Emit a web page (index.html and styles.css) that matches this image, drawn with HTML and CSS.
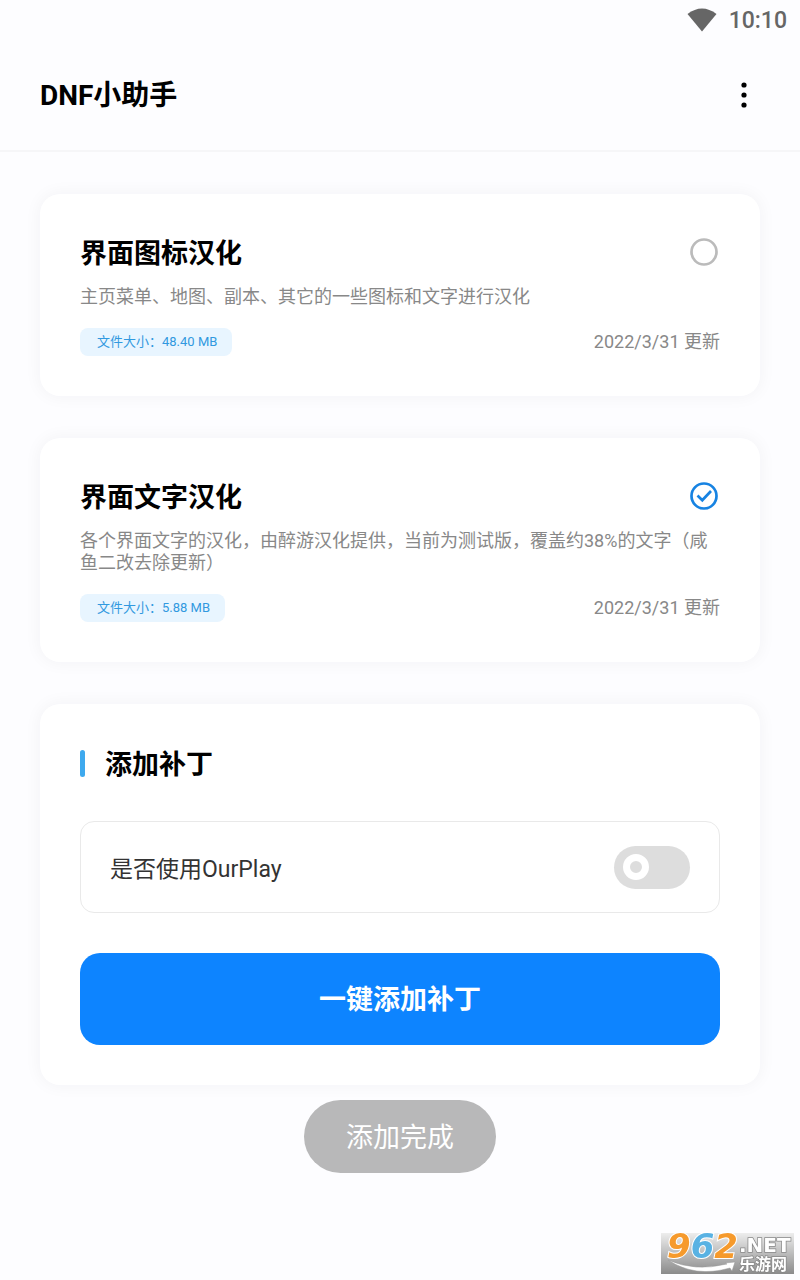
FILE: index.html
```html
<!DOCTYPE html>
<html lang="zh-CN">
<head>
<meta charset="utf-8">
<meta name="viewport" content="width=device-width, initial-scale=1">
<title>DNF小助手</title>
<link rel="stylesheet" href="styles.css">
</head>
<body>
<div class="status-bar">
  <svg class="wifi" viewBox="0 0 30 24" aria-hidden="true"><path d="M0.5 6Q15-5 29.500 6L15 23.500Z"/></svg>
  <time>10:10</time>
</div>
<header class="app-bar">
  <h1 class="title app-title">DNF小助手</h1>
  <button class="more" type="button" aria-label="更多">
    <svg viewBox="0 0 6 26" aria-hidden="true"><circle cx="3" cy="3" r="2.600"/><circle cx="3" cy="13" r="2.600"/><circle cx="3" cy="23" r="2.600"/></svg>
  </button>
</header>
<main class="content">
  <section class="card">
    <div class="row">
      <h2 class="title"><label for="icons">界面图标汉化</label></h2>
      <input class="pick" type="checkbox" id="icons">
      <svg class="mark" viewBox="0 0 28 28" aria-hidden="true"><circle cx="14" cy="14" r="12.500"/></svg>
    </div>
    <p class="desc">主页菜单、地图、副本、其它的一些图标和文字进行汉化</p>
    <div class="row">
      <span class="tag">文件大小：48.40 MB</span>
      <time class="date">2022/3/31 更新</time>
    </div>
  </section>
  <section class="card">
    <div class="row">
      <h2 class="title"><label for="texts">界面文字汉化</label></h2>
      <input class="pick" type="checkbox" id="texts" checked>
      <svg class="mark mark-on" viewBox="0 0 28 28" aria-hidden="true"><circle cx="14" cy="14" r="12.500"/><path d="M7.500 13.500L12.300 18.200L21 9"/></svg>
    </div>
    <p class="desc">各个界面文字的汉化，由醉游汉化提供，当前为测试版，覆盖约38%的文字（咸鱼二改去除更新）</p>
    <div class="row">
      <span class="tag">文件大小：5.88 MB</span>
      <time class="date">2022/3/31 更新</time>
    </div>
  </section>
  <section class="card">
    <h2 class="title patch-title">添加补丁</h2>
    <div class="option">
      <label for="ourplay">是否使用OurPlay</label>
      <input class="switch" type="checkbox" role="switch" id="ourplay">
    </div>
    <button class="primary" type="button">一键添加补丁</button>
  </section>
</main>
<div class="toast" role="status">添加完成</div>
<svg class="watermark" viewBox="0 0 133 41" role="img" aria-label="962.NET 乐游网">
  <defs><linearGradient id="plate" x1="0" y1="0" x2="0" y2="1"><stop offset="0" stop-color="#ededed"/><stop offset="1" stop-color="#8b8b8b"/></linearGradient></defs>
  <rect width="133" height="41" fill="url(#plate)"/>
  <path class="swoosh" d="M7 27Q34 39 66 31L64 30L74 29L71 38L69 35Q34 45 7 27Z"/>
  <text class="num" x="6" y="25"><tspan fill="#f69a2c">9</tspan><tspan fill="#59b2e3">6</tspan><tspan fill="#f69a2c">2</tspan></text>
  <text class="net" x="78" y="19">.NET</text>
  <text class="site" x="78" y="37">乐游网</text>
</svg>
</body>
</html>
```
FILE: styles.css
```css
*, *::before {
  box-sizing: border-box;
}

body {
  margin: 0;
  min-height: 100vh;
  background: #fdfdff;
  color: #000;
  font-family: Roboto, "Noto Sans CJK SC", sans-serif;
}

h1, h2, p {
  margin: 0;
}

button, input {
  margin: 0;
  font-family: inherit;
}

.status-bar {
  display: flex;
  justify-content: flex-end;
  align-items: center;
  gap: 12px;
  height: 40px;
  padding: 0 13px;
  color: #666;
  font-size: 23px;
  font-weight: 500;
}

.wifi {
  width: 30px;
  height: 24px;
  fill: #666;
}

.app-bar {
  display: flex;
  justify-content: space-between;
  align-items: center;
  height: 112px;
  padding: 0 40px;
  border-bottom: 2px solid #f6f6f8;
}

.title {
  padding-top: 2px;
  font-size: 27px;
  font-weight: 700;
  line-height: 36px;
}

.app-title {
  font-size: 28px;
}

.more {
  display: flex;
  justify-content: center;
  width: 32px;
  padding: 0;
  border: 0;
  background: none;
}

.more svg {
  width: 6px;
  height: 26px;
}

.content {
  display: flex;
  flex-direction: column;
  gap: 42px;
  padding: 42px 40px 195px;
}

.card {
  padding: 40px;
  border-radius: 20px;
  background: #fff;
  box-shadow: 0 0 16px 2px rgba(20, 20, 50, 0.04);
}

.row {
  position: relative;
  display: flex;
  justify-content: space-between;
  align-items: center;
}

.pick {
  position: absolute;
  right: 2px;
  width: 28px;
  height: 28px;
  opacity: 0;
}

.mark {
  width: 28px;
  height: 28px;
  margin: 0 2px 2px 0;
  fill: none;
  stroke: #bbb;
  stroke-width: 2.7;
}

.mark-on {
  stroke: #1783e2;
}

.desc {
  margin: 14px 0 20px;
  color: #888;
  font-size: 18px;
  line-height: 22px;
}

.tag {
  padding: 0 15px 0 17px;
  border-radius: 8px;
  background: #e8f5ff;
  color: #3199e0;
  font-size: 13px;
  line-height: 28px;
}

.date {
  color: #888;
  font-size: 18px;
  line-height: 28px;
}

.patch-title {
  display: flex;
  align-items: center;
  gap: 20px;
  padding-top: 3px;
}

.patch-title::before {
  content: "";
  width: 5px;
  height: 27px;
  margin-bottom: 4px;
  border-radius: 3px;
  background: #3ea9ee;
}

.option {
  display: flex;
  justify-content: space-between;
  align-items: center;
  height: 92px;
  margin: 38px 0 40px;
  padding: 0 29px;
  border: 1px solid #e9e9e9;
  border-radius: 14px;
  color: #333;
  font-size: 23px;
}

.switch {
  appearance: none;
  display: flex;
  align-items: center;
  width: 76px;
  height: 43px;
  padding: 0 9px;
  border-radius: 22px;
  background: #ddd;
}

.switch::before {
  content: "";
  width: 26px;
  height: 26px;
  border: 7px solid #fff;
  border-radius: 50%;
}

.switch:checked {
  justify-content: flex-end;
  background: #0d84ff;
}

.primary {
  display: block;
  width: 100%;
  height: 92px;
  padding: 0 0 4px;
  border: 0;
  border-radius: 20px;
  background: #0d84ff;
  color: #fff;
  font-size: 27px;
  font-weight: 700;
}

.toast {
  position: fixed;
  bottom: 107px;
  left: 50%;
  padding: 3px 42px 0;
  border-radius: 37px;
  background: #b8b8b9;
  color: #fff;
  font-size: 27px;
  line-height: 70px;
  white-space: nowrap;
  transform: translateX(-50%);
}

.watermark {
  position: fixed;
  right: 6px;
  bottom: 6px;
  width: 133px;
  height: 41px;
  overflow: visible;
}

.swoosh {
  fill: #fff;
  stroke: #999;
  stroke-width: 0.5;
}

.num, .net, .site {
  stroke: #fff;
  paint-order: stroke;
}

.num {
  font: italic 700 34px "DejaVu Sans", sans-serif;
  stroke-width: 2;
}

.net {
  font: 700 20px "DejaVu Sans", sans-serif;
  fill: #fff;
  stroke: #888;
  stroke-width: 1.5;
}

.site {
  font: 700 16px "Noto Sans CJK SC", sans-serif;
  fill: #fff;
  stroke: #888;
  stroke-width: 1.5;
}
```
